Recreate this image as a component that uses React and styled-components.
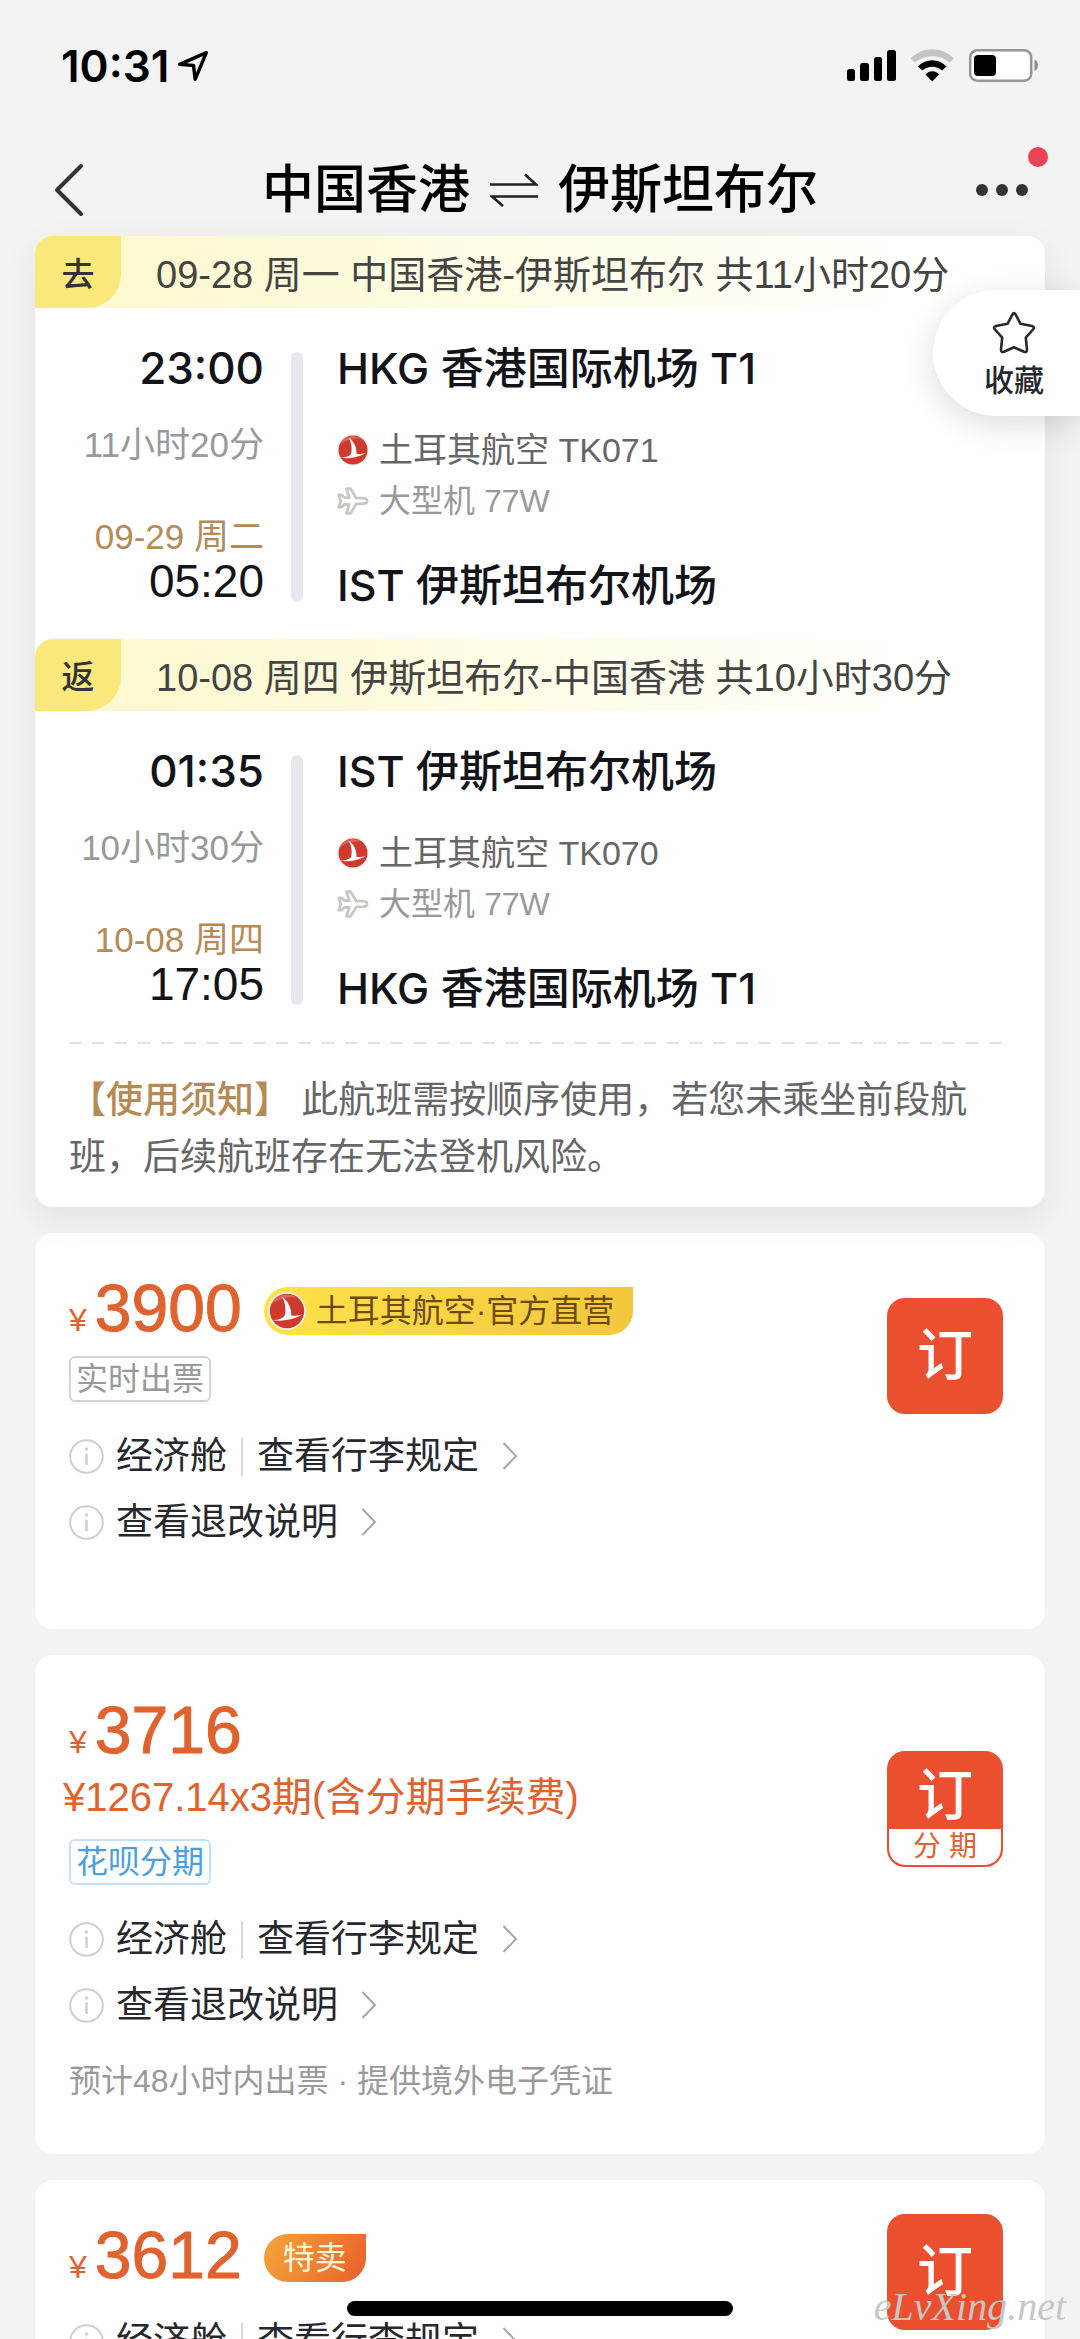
import React from "react";
import styled, { createGlobalStyle, css } from "styled-components";

const BASE = `"Liberation Sans", "Noto Sans CJK SC", sans-serif`;
const STRONG = `Inter, "Noto Sans CJK SC", sans-serif`;

const GlobalStyle = createGlobalStyle`
  * { box-sizing: border-box; }
  body { margin: 0; background: #f3f3f3; font-family: ${BASE}; color: #12141a; }
  button { font-family: inherit; color: inherit; border: 0; background: none; padding: 0; margin: 0; cursor: pointer; }
  h1, h2, p { margin: 0; font-weight: 400; }
  svg { display: block; flex: none; }
`;

const Screen = styled.div`
  position: relative;
  height: 100vh;
  overflow: hidden;
  display: flex;
  flex-direction: column;
`;

const StatusBar = styled.header`
  height: 132px;
  padding: 0 42px 0 61px;
  display: flex;
  align-items: center;
  justify-content: space-between;
`;

const Clock = styled.div`
  display: flex;
  align-items: center;
  gap: 8px;
  font: 600 44px/48px ${STRONG};
  color: #000;
`;

const NavBar = styled.nav`
  height: 104px;
  padding: 12px 32px 0 52px;
  display: flex;
  align-items: center;
  justify-content: space-between;
`;

const IconButton = styled.button`
  width: ${(p) => (p.$end ? 100 : 80)}px;
  height: 88px;
  display: flex;
  align-items: center;
  justify-content: ${(p) => (p.$end ? "flex-end" : "flex-start")};
`;

const Title = styled.h1`
  display: flex;
  align-items: center;
  gap: 20px;
  font: 500 52px/72px ${STRONG};
  color: #000;
`;

const Feed = styled.main`
  flex: 1;
  min-height: 0;
  padding: 0 35px;
  display: flex;
  flex-direction: column;
  gap: 26px;
`;

const Card = styled.section`
  flex: none;
  background: #fff;
  border-radius: 18px;
`;

const Itinerary = styled(Card)`
  position: relative;
  box-shadow: 0 12px 36px rgba(0, 0, 0, 0.07);
`;

const Banner = styled.div`
  display: flex;
  height: 72px;
  border-radius: 18px 18px 0 0;
  background: linear-gradient(90deg, #fcf8d0 10%, #fefce4 45%, #ffffff 92%);
`;

const BannerTag = styled.span`
  width: 86px;
  display: flex;
  align-items: center;
  justify-content: center;
  border-radius: 18px 0 34px 0;
  background: #fae87a;
  font-size: 33px;
  font-weight: 500;
  color: #333;
`;

const BannerText = styled.h2`
  padding-left: 35px;
  font-size: 38px;
  line-height: 78px;
  color: #444;
  white-space: nowrap;
`;

const Leg = styled.div`
  display: flex;
  padding: 30px 34px 24px;
`;

const Times = styled.div`
  width: 195px;
  display: flex;
  flex-direction: column;
  text-align: right;
  white-space: nowrap;
`;

const Depart = styled.time`
  font: 500 44px/60px ${STRONG};
`;

const Duration = styled.span`
  margin: 27px 0 52px;
  font-size: 35px;
  line-height: 40px;
  color: #999;
`;

const ArriveDate = styled.span`
  font-size: 35px;
  line-height: 40px;
  color: #b58a55;
`;

const Arrive = styled.time`
  font-size: 46px;
  line-height: 48px;
`;

const Track = styled.div`
  width: 12px;
  margin: 14px 34px 13px 27px;
  border-radius: 6px;
  background: #e6e8ee;
`;

const Stops = styled.div`
  flex: 1;
  display: flex;
  flex-direction: column;
`;

const Airport = styled.p`
  font: 500 43px/60px ${STRONG};
`;

const FlightInfo = styled.div`
  display: flex;
  flex-direction: column;
  gap: 11px;
  margin: 32px 0 34px;
`;

const FlightLine = styled.p`
  display: flex;
  align-items: center;
  gap: 10px;
  font-size: ${(p) => (p.$light ? 32 : 34)}px;
  line-height: 40px;
  color: ${(p) => (p.$light ? "#999" : "#666")};
`;

const Dashes = styled.div`
  height: 2px;
  margin: 0 34px;
  background: repeating-linear-gradient(90deg, #e2e2e2 0 12px, transparent 12px 23px);
`;

const Notice = styled.p`
  padding: 28px 34px 21px;
  font-size: 37px;
  line-height: 57px;
  color: #666;

  strong { font-weight: 500; color: #b58a55; }
`;

const OfferCard = styled(Card)`
  min-height: 396px;
  padding: 36px 42px 0 34px;
`;

const OfferHead = styled.div`
  display: flex;
  align-items: center;
  justify-content: space-between;
`;

const OfferSummary = styled.div`
  display: flex;
  flex-direction: column;
  align-items: flex-start;
  padding-bottom: 12px;
`;

const PriceRow = styled.div`
  height: 80px;
  padding-top: 4px;
  display: flex;
  align-items: center;
  gap: 22px;
`;

const Price = styled.strong`
  padding-top: 6px;
  font-size: 66px;
  line-height: 80px;
  font-weight: 400;
  color: #e0622f;
  -webkit-text-stroke: 1px #e0622f;
`;

const Currency = styled.span`
  margin-right: 8px;
  font-size: 32px;
  -webkit-text-stroke: 0;
`;

const badgeShape = css`
  height: 48px;
  display: flex;
  align-items: center;
  font-size: 32px;
  line-height: 48px;
  white-space: nowrap;
`;

const AirlineBadge = styled.span`
  ${badgeShape}
  gap: 10px;
  padding: 0 19px 0 4px;
  border-radius: 24px 0 24px 24px;
  background: linear-gradient(90deg, #fde24a, #f4c63c);
  color: #6d4a14;
`;

const SaleBadge = styled.span`
  ${badgeShape}
  padding: 0 19px;
  border-radius: 24px 0 24px 24px;
  background: linear-gradient(115deg, #f2a73a, #ea5f2c);
  color: #fff6d8;
`;

const Installment = styled.p`
  margin: 0 0 9px -6px;
  font-size: 40px;
  line-height: 52px;
  color: #e0622f;
`;

const Tag = styled.span`
  margin: 7px 0 9px;
  padding: 0 5px;
  border: 2px solid ${(p) => (p.$blue ? "#c3e2f8" : "#d3d3d3")};
  border-radius: 6px;
  font-size: 32px;
  line-height: 42px;
  color: ${(p) => (p.$blue ? "#4a9fe3" : "#999")};
`;

const BookButton = styled.button`
  flex: none;
  width: 116px;
  height: 116px;
  margin: -4px 0 -24px;
  overflow: hidden;
  display: flex;
  flex-direction: column;
  border: 2px solid #ea5030;
  border-radius: 18px;
  background: #ea5030;
`;

const BookLabel = styled.span`
  flex: 1;
  width: 100%;
  padding-top: ${(p) => (p.$split ? 10 : 0)}px;
  display: flex;
  align-items: center;
  justify-content: center;
  font-size: 56px;
  line-height: 66px;
  font-weight: 500;
  color: #fff;
`;

const BookPlan = styled.span`
  width: 100%;
  height: 36px;
  border-radius: 0 0 16px 16px;
  background: #fff;
  font-size: 28px;
  line-height: 36px;
  color: #e0622f;
`;

const RuleList = styled.div`
  display: flex;
  flex-direction: column;
  align-items: flex-start;
`;

const Rule = styled.button`
  height: 66px;
  display: flex;
  align-items: center;
  font-size: 37px;
  line-height: 60px;
  color: #26282e;
  white-space: nowrap;
`;

const RuleText = styled.span`
  margin: 0 23px 0 12px;
  padding-top: 2px;
  display: flex;
  align-items: center;
`;

const Divider = styled.i`
  width: 2px;
  height: 38px;
  margin: 0 14px;
  background: #d8d8d8;
`;

const Footnote = styled.p`
  padding: 23px 0 53px;
  font-size: 32px;
  line-height: 40px;
  color: #999;
`;

const Favorite = styled.button`
  && {
    position: absolute;
    top: 290px;
    right: 0;
    width: 147px;
    height: 126px;
    padding: 7px 0 0 15px;
    display: flex;
    flex-direction: column;
    align-items: center;
    justify-content: center;
    gap: 4px;
    border-radius: 63px 0 0 63px;
    background: #fff;
    box-shadow: 0 8px 32px rgba(0, 0, 0, 0.14);
    font-size: 30px;
    line-height: 44px;
    font-weight: 500;
    color: #26282e;
  }
`;

const HomeIndicator = styled.div`
  position: absolute;
  left: 50%;
  bottom: 23px;
  width: 386px;
  height: 15px;
  margin-left: -193px;
  border-radius: 8px;
  background: #000;
`;

const RedDot = styled.span`
  position: absolute;
  top: 147px;
  right: 32px;
  width: 20px;
  height: 20px;
  border-radius: 50%;
  background: #eb4255;
`;

const SiteMark = styled.span`
  position: absolute;
  right: 14px;
  bottom: 8px;
  font: italic 400 40px/48px "Liberation Serif", serif;
  color: #c6c6c6;
`;

const StatusIcons = () => (
  <svg width="191" height="34" viewBox="0 0 191 34" aria-hidden="true">
    <rect x="0" y="20" width="8" height="12" rx="2.5" />
    <rect x="13" y="14" width="9" height="18" rx="2.5" />
    <rect x="27" y="8" width="8" height="24" rx="2.5" />
    <rect x="40" y="1" width="9" height="31" rx="2.5" />
    <path d="M63.500 9.500L68 13.500C77.500 5 93 5 102.500 13.500L107 9.500C95 -3 75.500 -3 63.500 9.500Z" fill="#c4c4c4" />
    <path d="M71 17.500L75.500 21.500C81 16.500 89.500 16.500 95 21.500L99.500 17.500C91.500 9 79 9 71 17.500Z" />
    <path d="M78.500 25.500C82 21 88.500 21 92 25.500L85.300 32.500Z" />
    <rect x="123.200" y="1.200" width="61" height="30.500" rx="7" fill="#fff" stroke="#969696" strokeWidth="2.500" />
    <rect x="127" y="6" width="22" height="21" rx="4" />
    <path d="M187.500 10.500C192 12.500 192 20 187.500 22Z" fill="#8a8a8a" />
  </svg>
);

const LocationArrow = () => (
  <svg width="32" height="32" viewBox="0 0 30 30" fill="none" stroke="#000" strokeWidth="3.200" strokeLinejoin="round" aria-hidden="true">
    <path d="M2.500 13.500L27.500 2.500L17 27.500L15.500 14.500Z" />
  </svg>
);

const Logo = ({ size = 32 }) => (
  <svg width={size} height={size} viewBox="0 0 32 32" aria-hidden="true">
    <circle cx="16" cy="16" r="16" fill="#f4f1ee" />
    <circle cx="16" cy="16" r="14.500" fill="#cf3a2e" />
    <path d="M2.500 11C6 3 16 -1 24 4.500C16 4 8 6 2.500 11Z" fill="#dd6256" />
    <path d="M3.500 23.500C8 24 12 22.500 14 20C15.500 15 14.500 8.500 11.500 3.500C17 7.500 20 13.500 19.500 19.800C23 20.300 26 20 29 18.800C24 22.500 12 25.500 3.500 23.500Z" fill="#fff" />
  </svg>
);

const PlaneIcon = () => (
  <svg width="32" height="32" viewBox="0 0 34 32" fill="none" stroke="#c6cac2" strokeWidth="3" strokeLinejoin="round" aria-hidden="true">
    <path d="M32 16C32 14 29 13 26 13H20.500L14.500 3H10L13 12.500H8L5 9.500H1.800L4 16L1.800 22.500H5L8 19.500H13L10 29H14.500L20.500 19H26C29 19 32 18 32 16Z" />
  </svg>
);

const InfoIcon = () => (
  <svg width="35" height="35" viewBox="0 0 35 35" fill="none" stroke="#cfcfcf" strokeWidth="2" aria-hidden="true">
    <circle cx="17.500" cy="17.500" r="16.300" />
    <path d="M17.500 14.500V26" strokeWidth="2.500" />
    <circle cx="17.500" cy="10" r="1.700" fill="#cfcfcf" stroke="none" />
  </svg>
);

const Chevron = () => (
  <svg width="16" height="28" viewBox="0 0 16 28" fill="none" stroke="#a6a6a6" strokeWidth="2" aria-hidden="true">
    <path d="M1.500 1L14 14L1.500 27" />
  </svg>
);

const StarIcon = () => (
  <svg width="44" height="44" viewBox="0 0 44 44" fill="none" stroke="#26282e" strokeWidth="2.600" strokeLinejoin="round" aria-hidden="true">
    <path d="M20.600 3.200Q22 1 23.400 3.200L28.500 12.800L40 15Q43.200 16 41 18.500L33.800 26.600L35 38.500Q35 41.800 32 40.800L22 36.300L12 40.800Q9 41.800 9 38.500L10.200 26.600L3 18.500Q0.800 16 4 15L15.500 12.800Z" />
  </svg>
);

const LEGS = [
  {
    tag: "去", text: "09-28 周一 中国香港-伊斯坦布尔 共11小时20分",
    depart: "23:00", duration: "11小时20分", date: "09-29 周二", arrive: "05:20",
    from: "HKG 香港国际机场 T1", to: "IST 伊斯坦布尔机场", flight: "土耳其航空 TK071",
  },
  {
    tag: "返", text: "10-08 周四 伊斯坦布尔-中国香港 共10小时30分",
    depart: "01:35", duration: "10小时30分", date: "10-08 周四", arrive: "17:05",
    from: "IST 伊斯坦布尔机场", to: "HKG 香港国际机场 T1", flight: "土耳其航空 TK070",
  },
];

const OFFERS = [
  { price: "3900", airline: "土耳其航空·官方直营", tag: "实时出票" },
  {
    price: "3716", installment: "¥1267.14x3期(含分期手续费)", tag: "花呗分期", blue: true, plan: "分 期",
    note: "预计48小时内出票 · 提供境外电子凭证",
  },
  { price: "3612", sale: "特卖" },
];

const LegBlock = ({ leg }) => (
  <>
    <Banner>
      <BannerTag>{leg.tag}</BannerTag>
      <BannerText>{leg.text}</BannerText>
    </Banner>
    <Leg>
      <Times>
        <Depart>{leg.depart}</Depart>
        <Duration>{leg.duration}</Duration>
        <ArriveDate>{leg.date}</ArriveDate>
        <Arrive>{leg.arrive}</Arrive>
      </Times>
      <Track />
      <Stops>
        <Airport>{leg.from}</Airport>
        <FlightInfo>
          <FlightLine><Logo size={32} />{leg.flight}</FlightLine>
          <FlightLine $light><PlaneIcon />大型机 77W</FlightLine>
        </FlightInfo>
        <Airport>{leg.to}</Airport>
      </Stops>
    </Leg>
  </>
);

const Offer = ({ offer }) => (
  <OfferCard>
    <OfferHead>
      <OfferSummary>
        <PriceRow>
          <Price><Currency>¥</Currency>{offer.price}</Price>
          {offer.airline && <AirlineBadge><Logo size={38} />{offer.airline}</AirlineBadge>}
          {offer.sale && <SaleBadge>{offer.sale}</SaleBadge>}
        </PriceRow>
        {offer.installment && <Installment>{offer.installment}</Installment>}
        {offer.tag && <Tag $blue={offer.blue}>{offer.tag}</Tag>}
      </OfferSummary>
      <BookButton>
        <BookLabel $split={Boolean(offer.plan)}>订</BookLabel>
        {offer.plan && <BookPlan>{offer.plan}</BookPlan>}
      </BookButton>
    </OfferHead>
    <RuleList>
      <Rule>
        <InfoIcon />
        <RuleText>经济舱<Divider />查看行李规定</RuleText>
        <Chevron />
      </Rule>
      <Rule>
        <InfoIcon />
        <RuleText>查看退改说明</RuleText>
        <Chevron />
      </Rule>
    </RuleList>
    {offer.note && <Footnote>{offer.note}</Footnote>}
  </OfferCard>
);

export default function App() {
  return (
    <Screen lang="zh-CN">
      <GlobalStyle />
      <StatusBar>
        <Clock>10:31<LocationArrow /></Clock>
        <StatusIcons />
      </StatusBar>
      <NavBar>
        <IconButton aria-label="返回">
          <svg width="34" height="56" viewBox="0 0 34 56" fill="none" stroke="#333" strokeWidth="4" strokeLinecap="round" strokeLinejoin="round">
            <path d="M29 4L5 28L29 52" />
          </svg>
        </IconButton>
        <Title>
          中国香港
          <svg width="48" height="34" viewBox="0 0 48 34" fill="none" stroke="#222" strokeWidth="2.600">
            <path d="M0 11.500H46L35 1.500M48 23.500H2L13 33" />
          </svg>
          伊斯坦布尔
        </Title>
        <IconButton $end aria-label="更多">
          <svg width="72" height="12" viewBox="0 0 72 12" fill="#333">
            <circle cx="6" cy="6" r="6" />
            <circle cx="26" cy="6" r="6" />
            <circle cx="46" cy="6" r="6" />
          </svg>
        </IconButton>
        <RedDot />
      </NavBar>
      <Feed>
        <Itinerary>
          {LEGS.map((leg) => <LegBlock key={leg.tag} leg={leg} />)}
          <Dashes />
          <Notice><strong>【使用须知】</strong> 此航班需按顺序使用，若您未乘坐前段航班，后续航班存在无法登机风险。</Notice>
        </Itinerary>
        {OFFERS.map((offer) => <Offer key={offer.price} offer={offer} />)}
      </Feed>
      <Favorite><StarIcon />收藏</Favorite>
      <HomeIndicator />
      <SiteMark>eLvXing.net</SiteMark>
    </Screen>
  );
}
